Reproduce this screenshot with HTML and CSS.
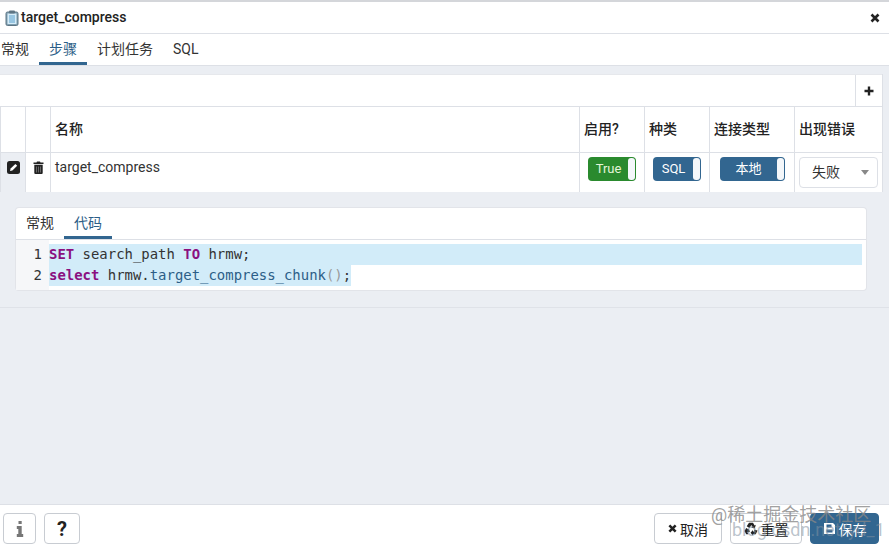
FILE: index.html
```html
<!DOCTYPE html>
<html lang="zh">
<head>
<meta charset="utf-8">
<title>target_compress</title>
<link rel="stylesheet" href="styles.css">
</head>
<body>
<div class="dialog">
  <header class="title-bar">
    <svg class="title-icon" viewBox="0 0 14 16" width="14" height="16"><rect x="1" y="2" width="12" height="13.5" rx="1.5" fill="#7f9fb0" stroke="#5d7483"/><rect x="2.5" y="3.5" width="9" height="10.5" fill="#d6ecf8"/><rect x="4" y="0.5" width="6" height="3" rx="1" fill="#5d7483"/><path d="M4 6h6M4 8h6M4 10h6M4 12h6" stroke="#5aa0cc" stroke-width="1"/></svg>
    <span class="title-text">target_compress</span>
    <svg class="close-icon" viewBox="0 0 10 10" width="10" height="10"><path d="M1.5 1.5l7 7M8.500 1.500l-7 7" stroke="#222" stroke-width="2.600"/></svg>
  </header>
  <nav class="tabs main-tabs">
    <span class="tab tab-first">常规</span>
    <span class="tab active">步骤</span>
    <span class="tab">计划任务</span>
    <span class="tab">SQL</span>
  </nav>
  <main class="content">
    <section class="grid-panel">
      <div class="grid-toolbar">
        <button class="add-btn" type="button"><svg viewBox="0 0 10 10" width="10" height="10"><path d="M5 .5v9M.5 5h9" stroke="#222" stroke-width="2.400"/></svg></button>
      </div>
      <div class="grid-row grid-head">
        <div class="cell"></div>
        <div class="cell"></div>
        <div class="cell cell-name">名称</div>
        <div class="cell">启用?</div>
        <div class="cell">种类</div>
        <div class="cell">连接类型</div>
        <div class="cell">出现错误</div>
      </div>
      <div class="grid-row grid-body">
        <div class="cell cell-icon cell-edit">
          <svg viewBox="0 0 13 13" width="13" height="13"><rect width="13" height="13" rx="2.500" fill="#222"/><path d="M3 10l.6-2.400L8.400 2.900l1.800 1.800-4.800 4.700z" fill="#fff"/></svg>
        </div>
        <div class="cell cell-icon">
          <svg viewBox="0 0 11 13" width="11" height="13"><path d="M4 .5h3l.5 1H10.500v1.500H.5V1.500H3.500z" fill="#222"/><path d="M1.300 3.800h8.400V12a1 1 0 0 1-1 1H2.300a1 1 0 0 1-1-1z" fill="#222"/><path d="M3.500 5.500v6M5.500 5.500v6M7.500 5.500v6" stroke="#777" stroke-width=".8"/></svg>
        </div>
        <div class="cell cell-text">target_compress</div>
        <div class="cell cell-switch"><span class="switch switch-green"><span class="switch-label">True</span><span class="knob"></span></span></div>
        <div class="cell cell-switch"><span class="switch switch-blue"><span class="switch-label">SQL</span><span class="knob"></span></span></div>
        <div class="cell cell-switch"><span class="switch switch-blue switch-wide"><span class="switch-label">本地</span><span class="knob"></span></span></div>
        <div class="cell cell-select"><span class="select"><span class="select-value">失败</span><span class="caret"></span></span></div>
      </div>
    </section>
    <section class="sub-panel">
      <nav class="tabs sub-tabs">
        <span class="tab">常规</span>
        <span class="tab active">代码</span>
      </nav>
      <div class="code">
        <div class="gutter"><span>1</span><span>2</span></div>
        <div class="lines">
          <div class="line line-full"><span class="kw">SET</span> search_path <span class="kw">TO</span> hrmw;</div>
          <div class="line"><span class="sel"><span class="kw">select</span> hrmw.<span class="fn">target_compress_chunk</span><span class="paren">()</span>;</span></div>
        </div>
      </div>
    </section>
  </main>
  <footer class="footer">
    <div class="btn-group">
      <button class="btn btn-info" type="button"><svg viewBox="0 0 8 16" width="8" height="16"><path d="M2.500 0h3.200v3H2.500zM.8 5h4.900v8h1.500v3H.8v-3h1.500V8H.8z" fill="#777"/></svg></button>
      <button class="btn btn-help" type="button">?</button>
    </div>
    <div class="btn-group">
      <button class="btn btn-text btn-cancel" type="button"><svg viewBox="0 0 10 10" width="9" height="9"><path d="M1.500 1.500l7 7M8.500 1.500l-7 7" stroke="#222" stroke-width="2.800"/></svg>取消</button>
      <button class="btn btn-text btn-reset" type="button"><svg viewBox="0 0 14 14" width="14" height="14"><path d="M5 .8h4l1.600 2.600 1.200-.7-1 3.700-3.600-1 1.200-.7L7.300 3 5.500 6 2.700 4.300z" fill="#222"/><path d="M13.500 8.500l-1.700 3.700H9v1.400L6.500 10.800 9 8v1.400h1.700l-.9-2z" fill="#222"/><path d="M.5 9l1.700-3 2.500 1.500.2-1.100L5.800 10l-3.600.6.700-1.200 1.600 2.800H2.200z" fill="#222"/></svg>重置</button>
      <button class="btn btn-text btn-save" type="button"><svg viewBox="0 0 13 13" width="13" height="13"><path d="M1 1h9l2 2v9H1z" fill="#fff"/><path d="M3.500 2.500h5v3h-5zM3.500 7.500h6v3h-6z" fill="#2f6390"/></svg>保存</button>
    </div>
  </footer>
  <div class="watermark">@稀土掘金技术社区</div>
  <div class="watermark-faint">blog.csdn.net/yd_1</div>
</div>
</body>
</html>
```
FILE: styles.css
```css
* { box-sizing: border-box; }
html, body { margin: 0; height: 100%; }
body {
  font-family: Roboto, "Noto Sans CJK SC", sans-serif;
  font-size: 14px;
  color: #222;
  background: #fff;
}
.dialog {
  position: relative;
  width: 889px;
  height: 545px;
  display: flex;
  flex-direction: column;
  border-top: 2px solid #d4d6da;
  overflow: hidden;
}
.title-bar {
  height: 32px;
  flex: none;
  display: flex;
  align-items: center;
  padding: 0 9px 0 5px;
  gap: 2px;
  border-bottom: 1px solid #dde0e6;
}
.title-text { font-size: 14px; font-weight: 500; color: #222; flex: 1; padding-bottom: 1px; }
.close-icon { display: block; }
.tabs { display: flex; }
.tab {
  display: block;
  height: 100%;
  color: #333;
  font-size: 14px;
  padding: 0 10px;
}
.tab.active { color: #2c5e87; border-bottom: 3px solid #326690; }
.main-tabs {
  flex: none;
  height: 32px;
  line-height: 30px;
  border-bottom: 1px solid #dde0e6;
}
.tab-first { padding: 0 10px 0 1px; }
.content {
  flex: 1;
  min-height: 0;
  background: #ebeef3;
  padding-top: 8px;
}
.content::after {
  content: "";
  display: block;
  border-top: 1px solid #dfe2e8;
  margin-top: 17px;
}
.grid-panel {
  width: 883px;
  background: #fff;
  border-right: 1px solid #dde0e6;
}
.grid-toolbar {
  height: 33px;
  display: flex;
  justify-content: flex-end;
  border-top: 1px solid #e6e8ec;
  border-bottom: 1px solid #dde0e6;
}
.add-btn {
  width: 27px;
  padding: 0 1px 0 0;
  background: #fff;
  border: 0;
  border-left: 1px solid #dde0e6;
  display: flex;
  align-items: center;
  justify-content: center;
}
.grid-row {
  display: grid;
  grid-template-columns: 26px 25px 529px 65px 65px 85px 87px;
}
.grid-head {
  height: 46px;
  border-bottom: 1px solid #dde0e6;
  font-weight: 500;
  color: #222;
}
.grid-body { height: 39px; }
.cell {
  border-right: 1px solid #dde0e6;
  padding: 0 4px;
}
.cell:first-child { border-left: 1px solid #dde0e6; }
.cell:last-child { border-right: 0; }
.grid-head .cell { display: flex; align-items: center; padding-bottom: 3px; }
.cell-icon { padding: 8px 0 0; display: flex; justify-content: center; align-items: flex-start; }
.cell-edit { background: #ebeef3; }
.cell-text { padding-top: 6px; color: #333; }
.cell-switch { padding-top: 4px; display: flex; justify-content: center; align-items: flex-start; }
.switch {
  width: 48px;
  height: 24px;
  border-radius: 4px;
  color: #fff;
  font-size: 13px;
  display: flex;
  align-items: center;
  padding: 1px;
}
.switch-wide { width: 65px; }
.switch-wide .switch-label { padding-bottom: 4px; }
.switch-green { background: #2a8a2e; color: #e6f5d8; }
.switch-blue { background: #326690; }
.switch-label { flex: 1; text-align: center; padding-bottom: 2px; }
.knob { width: 7px; height: 22px; background: #f4f7fa; border-radius: 3px; flex: none; }
.cell-select { padding: 4px 4px 0; }
.select {
  height: 31px;
  border: 1px solid #dde0e6;
  border-radius: 4px;
  background: #fff;
  display: flex;
  align-items: center;
  justify-content: space-between;
  padding: 0 8px 0 12px;
  color: #333;
}
.select-value { padding-bottom: 3px; }
.caret { width: 0; height: 0; border: 4px solid transparent; border-top: 5px solid #888; margin-top: 4px; }
.sub-panel {
  margin: 16px 23px 0 16px;
  height: 82px;
  background: #fff;
  box-shadow: 0 0 0 1px #e2e4e9;
  border-radius: 3px;
}
.sub-tabs {
  height: 32px;
  line-height: 30px;
  border-bottom: 1px solid #dde0e6;
}
.code { display: flex; font-family: "DejaVu Sans Mono", monospace; font-size: 13.950px; line-height: 21px; }
.gutter { width: 33px; display: flex; flex-direction: column; text-align: right; padding: 4px 7px 0 0; color: #333; flex: none; background: #f6f7f9; height: 50px; }
.lines { flex: 1; margin-right: 4px; padding-top: 4px; color: #333; }
.line { white-space: pre; }
.line-full { background: #d2ecf9; }
.sel { background: #d2ecf9; display: inline-block; }
.kw { color: #8a1080; font-weight: 700; }
.fn { color: #2c5e87; }
.paren { color: #999; }
.footer {
  flex: none;
  height: 41px;
  border-top: 1px solid #dde0e6;
  display: flex;
  justify-content: space-between;
  align-items: flex-start;
  padding: 8px 10px 0 3px;
}
.btn-group { display: flex; gap: 8px; }
.btn {
  height: 31px;
  border: 1px solid #c8ccd2;
  border-radius: 4px;
  background: #fff;
  padding: 0;
  font-family: inherit;
  font-size: 14px;
  display: flex;
  align-items: center;
  justify-content: center;
  color: #222;
}
.btn-info { width: 33px; }
.btn-help { width: 36px; font-size: 20px; font-weight: 700; }
.btn-text { width: 68px; gap: 3px; }
.btn-reset { width: 72px; }
.btn-save { background: #326690; border-color: #326690; color: #fff; width: 69px; }
.watermark {
  position: absolute;
  left: 711px;
  top: 498px;
  font-size: 18px;
  color: rgba(135,135,135,.8);
  white-space: nowrap;
}
.watermark-faint {
  position: absolute;
  left: 732px;
  top: 517px;
  font-size: 18px;
  color: rgba(130,145,160,.55);
  white-space: nowrap;
}
```
